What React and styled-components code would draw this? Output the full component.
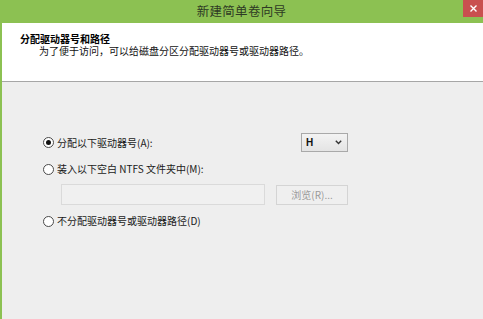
import React from "react";
import styled, { createGlobalStyle } from "styled-components";

const Global = createGlobalStyle`
  html, body { margin: 0; padding: 0; background: #eeeeee; }
  body { font-family: "Noto Sans CJK SC", "Noto Sans", sans-serif; }
  * { box-sizing: border-box; }
`;

const Window = styled.div`
  width: 483px;
  height: 319px;
  display: flex;
  flex-direction: column;
  border-left: 2px solid #8cc152;
  background: #eeeeee;
  overflow: hidden;
`;

const TitleBar = styled.div`
  height: 23px;
  margin-left: -2px;
  background: #8cc152;
  display: flex;
  align-items: center;
  justify-content: center;
  position: relative;
`;

const TitleText = styled.span`
  font-size: 12.5px;
  color: #2e3a24;
  letter-spacing: 0.3px;
  line-height: 1;
`;

const CloseButton = styled.div`
  position: absolute;
  right: 0;
  top: 0;
  width: 20px;
  height: 17px;
  background: #c9504f;
  display: flex;
  align-items: center;
  justify-content: center;
`;

const Header = styled.div`
  height: 59px;
  background: #ffffff;
  border-bottom: 1px solid #a6a6a6;
  padding: 10px 0 0 18px;
  display: flex;
  flex-direction: column;
`;

const HeaderTitle = styled.div`
  font-size: 10px;
  font-weight: 700;
  color: #000;
  line-height: 12px;
`;

const HeaderSub = styled.div`
  font-size: 10px;
  color: #111;
  line-height: 12px;
  padding-left: 19px;
`;

const Body = styled.div`
  flex: 1;
  padding: 51px 0 0 41px;
  display: flex;
  flex-direction: column;
`;

const Row = styled.div`
  width: 305px;
  height: ${(p) => p.$h}px;
  margin-top: ${(p) => p.$mt || 0}px;
  padding-left: ${(p) => p.$indent || 0}px;
  display: flex;
  align-items: center;
  justify-content: space-between;
`;

const Option = styled.label`
  display: flex;
  align-items: center;
  gap: 3px;
  font-size: 10px;
  color: #1a1a1a;
  line-height: 1;
`;

const RadioCircle = styled.span`
  width: 11px;
  height: 11px;
  border-radius: 50%;
  border: 1px solid #4a4a4a;
  background: #fff;
  display: flex;
  align-items: center;
  justify-content: center;
  &::after {
    content: "";
    width: 5px;
    height: 5px;
    border-radius: 50%;
    background: ${(p) => (p.$checked ? "#111" : "transparent")};
  }
`;

const Select = styled.div`
  width: 47px;
  height: 19px;
  border: 1px solid #a9a9a9;
  background: linear-gradient(#f3f3f3, #e4e4e4);
  display: flex;
  align-items: center;
  justify-content: space-between;
  padding: 0 5px 0 4px;
  font-size: 10px;
  font-weight: 700;
  color: #111;
  font-family: "Liberation Sans", sans-serif;
`;

const TextInput = styled.div`
  width: 204px;
  height: 21px;
  border: 1px solid #dadada;
  background: #f0f0f0;
`;

const Button = styled.div`
  width: 72px;
  height: 20px;
  border: 1px solid #d4d4d4;
  background: #efefef;
  display: flex;
  align-items: center;
  justify-content: center;
  font-size: 10px;
  color: #9a9a9a;
`;

const Radio = ({ checked, children }) => (
  <Option>
    <RadioCircle $checked={checked} />
    <span>{children}</span>
  </Option>
);

export default function App() {
  return (
    <>
      <Global />
      <Window>
        <TitleBar>
          <TitleText>新建简单卷向导</TitleText>
          <CloseButton>
            <svg width="7" height="7" viewBox="0 0 7 7">
              <path d="M0.5 0.5L6.5 6.5M6.5 0.5L0.5 6.5" stroke="#fff" strokeWidth="1.4" />
            </svg>
          </CloseButton>
        </TitleBar>
        <Header>
          <HeaderTitle>分配驱动器号和路径</HeaderTitle>
          <HeaderSub>为了便于访问，可以给磁盘分区分配驱动器号或驱动器路径。</HeaderSub>
        </Header>
        <Body>
          <Row $h={19}>
            <Radio checked>分配以下驱动器号(A):</Radio>
            <Select>
              <span>H</span>
              <svg width="7" height="5" viewBox="0 0 7 5">
                <path d="M0.8 0.8L3.5 3.6L6.2 0.8" stroke="#333" strokeWidth="1.4" fill="none" />
              </svg>
            </Select>
          </Row>
          <Row $h={16} $mt={9}>
            <Radio>装入以下空白 NTFS 文件夹中(M):</Radio>
          </Row>
          <Row $h={21} $mt={7} $indent={18}>
            <TextInput />
            <Button>浏览(R)...</Button>
          </Row>
          <Row $h={16} $mt={8}>
            <Radio>不分配驱动器号或驱动器路径(D)</Radio>
          </Row>
        </Body>
      </Window>
    </>
  );
}
